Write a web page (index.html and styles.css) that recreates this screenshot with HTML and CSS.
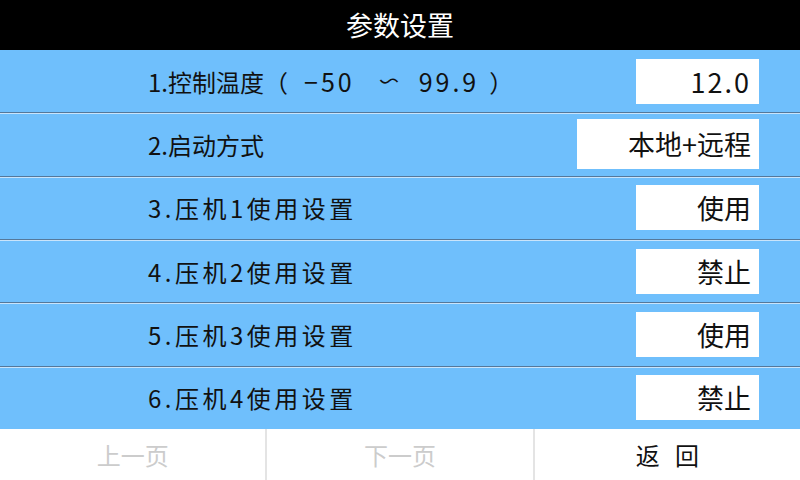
FILE: index.html
```html
<!DOCTYPE html>
<html lang="zh-CN">
<head>
    <meta charset="UTF-8">
    <meta name="viewport" content="width=device-width, initial-scale=1.0">
    <title>参数设置</title>
    <link rel="stylesheet" href="styles.css">
</head>
<body>
    <div class="screen">
        <div class="title">参数设置</div>
        <div class="params">
            <div class="row">
                <span class="label">1.控制温度（<span class="range"><span class="min">−50</span><span class="tilde">〜</span><span class="max">99.9</span></span>）</span>
                <span class="value num">12.0</span>
            </div>
            <div class="row">
                <span class="label">2.启动方式</span>
                <span class="value wide">本地+远程</span>
            </div>
            <div class="row">
                <span class="label spaced">3.压机1使用设置</span>
                <span class="value">使用</span>
            </div>
            <div class="row">
                <span class="label spaced">4.压机2使用设置</span>
                <span class="value">禁止</span>
            </div>
            <div class="row">
                <span class="label spaced">5.压机3使用设置</span>
                <span class="value">使用</span>
            </div>
            <div class="row">
                <span class="label spaced">6.压机4使用设置</span>
                <span class="value">禁止</span>
            </div>
        </div>
        <div class="nav">
            <button type="button" class="disabled">上一页</button>
            <button type="button" class="disabled">下一页</button>
            <button type="button" class="back">返 回</button>
        </div>
    </div>
</body>
</html>
```

FILE: styles.css
```css
body {
    margin: 0;
    font-family: 'Noto Sans CJK SC', 'Liberation Sans', sans-serif;
    background-color: #ffffff;
}
.screen {
    width: 800px;
    height: 480px;
    display: flex;
    flex-direction: column;
}
.title {
    height: 50px;
    background-color: #000000;
    color: #ffffff;
    font-size: 27px;
    line-height: 50px;
    text-align: center;
}
.params {
    height: 379px;
    display: flex;
    flex-direction: column;
    background-color: #6fbffc;
}
.row {
    flex: 1;
    display: flex;
    align-items: center;
    justify-content: space-between;
    padding: 0 41px 0 148px;
}
.row + .row {
    border-top: 1px solid #55789a;
    box-shadow: inset 0 1px 0 #c9e4fb;
}
.label {
    font-size: 24px;
    color: #111111;
    white-space: nowrap;
}
.label.spaced {
    letter-spacing: 3.5px;
}
/* temperature range inside the first label */
.range {
    font-size: 25px;
    letter-spacing: 3px;
}
.range .min {
    margin-left: 16px;
}
.range .tilde {
    display: inline-block;
    width: 20px;
    margin-left: 24px;
    font-size: 20px;
    letter-spacing: 0;
    transform: scaleX(-1);
    vertical-align: 3px;
}
.range .max {
    margin-left: 20px;
    margin-right: 10px;
}
.value {
    width: 115px;
    height: 45px;
    padding-right: 8px;
    background-color: #ffffff;
    color: #111111;
    font-size: 27px;
    line-height: 45px;
    text-align: right;
}
.value.num {
    letter-spacing: 2px;
}
.value.wide {
    width: 174px;
    height: 50px;
    line-height: 50px;
}
.nav {
    flex: 1;
    display: flex;
}
.nav button {
    flex: 1;
    border: none;
    background-color: #ffffff;
    font-family: inherit;
    font-size: 24px;
    color: #111111;
    padding: 0;
}
.nav button + button {
    border-left: 2px solid #e4e4e4;
}
.nav .disabled {
    color: #cccccc;
}
.nav .back {
    word-spacing: 10px;
}
```
